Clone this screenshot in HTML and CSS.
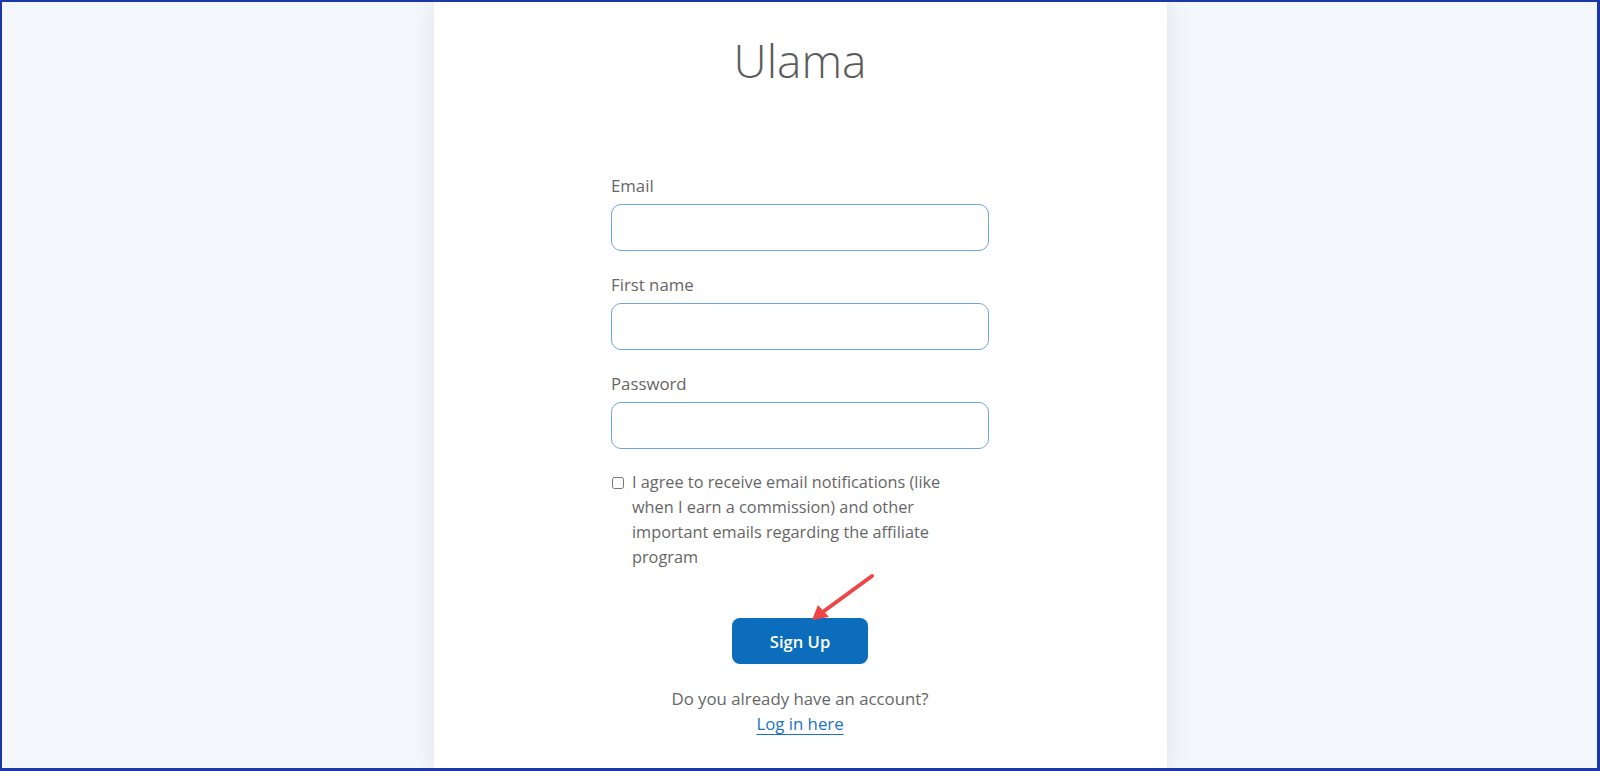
FILE: index.html
```html
<!DOCTYPE html>
<html lang="en">
<head>
<meta charset="utf-8">
<title>Ulama - Sign Up</title>
<link rel="stylesheet" href="styles.css">
</head>
<body>
<div class="frame">
  <main class="card">
    <h1 class="brand">Ulama</h1>
    <form class="form">
      <div class="field">
        <label class="label" for="email">Email</label>
        <input class="input" id="email" type="email">
      </div>
      <div class="field">
        <label class="label" for="fname">First name</label>
        <input class="input" id="fname" type="text">
      </div>
      <div class="field">
        <label class="label" for="pass">Password</label>
        <input class="input" id="pass" type="password">
      </div>
      <label class="agree">
        <input class="check" type="checkbox">
        <span class="agree-text">I agree to receive email notifications (like when I earn a commission) and other important emails regarding the affiliate program</span>
      </label>
      <div class="actions">
        <span class="arrow-wrap">
          <button class="btn" type="button">Sign Up</button>
          <svg class="arrow" width="70" height="56" viewBox="0 0 70 56" aria-hidden="true">
            <line x1="60" y1="4" x2="8" y2="42" stroke="#f04545" stroke-width="4" stroke-linecap="round"/>
            <polygon points="0,48 6,33 17,45" fill="#f04545"/>
          </svg>
        </span>
      </div>
      <p class="login">Do you already have an account?<br><a class="login-link" href="#">Log in here</a></p>
    </form>
  </main>
</div>
</body>
</html>
```

FILE: styles.css
```css
* { box-sizing: border-box; }
html, body { margin: 0; padding: 0; }
body {
  font-family: "Open Sans", "Noto Sans", sans-serif;
  color: #666;
}
.frame {
  width: 1600px;
  height: 771px;
  border: 2px solid #1b37a8;
  border-bottom-width: 3px;
  border-right-width: 3px;
  background: #f3f6fa;
  overflow: hidden;
  display: flex;
  justify-content: center;
}
.card {
  width: 733px;
  margin-left: 1px;
  background: #fff;
  box-shadow: 0 0 22px rgba(30, 45, 70, 0.09);
  padding-top: 30px;
  display: flex;
  flex-direction: column;
  align-items: center;
}
.brand {
  margin: 0;
  font-size: 46px;
  line-height: 56px;
  font-weight: 300;
  color: #5c5c5c;
}
.form {
  width: 378px;
  margin-top: 86px;
  display: flex;
  flex-direction: column;
}
.field {
  display: flex;
  flex-direction: column;
  gap: 6px;
  margin-bottom: 22px;
}
.label {
  font-size: 16.8px;
  line-height: 24px;
  color: #666;
}
.input {
  height: 47px;
  width: 100%;
  border: 1px solid #6fa6dc;
  border-radius: 10px;
  background: #fff;
  font: inherit;
  padding: 0 12px;
}
.agree {
  display: flex;
  align-items: flex-start;
  gap: 8px;
  margin-top: -1px;
  font-size: 16.3px;
  line-height: 25px;
  color: #666;
}
.check {
  margin: 7px 0 0 1px;
  width: 12px;
  height: 12px;
  flex: none;
}
.agree-text { flex: none; width: 338px; }
.actions {
  display: flex;
  justify-content: center;
  margin-top: 48px;
}
.arrow-wrap { position: relative; display: inline-block; }
.btn {
  width: 136px;
  height: 46px;
  border: 0;
  border-radius: 8px;
  background: #0b6dbb;
  color: #fff;
  font-family: inherit;
  font-size: 16.6px;
  font-weight: 600;
  cursor: pointer;
}
.arrow {
  position: absolute;
  left: 80px;
  top: -46px;
}
.login {
  margin: 22px 0 0;
  text-align: center;
  font-size: 16.8px;
  line-height: 25px;
  color: #666;
}
.login-link {
  color: #1a72c6;
  text-decoration: underline;
  text-underline-offset: 4px;
}
```
